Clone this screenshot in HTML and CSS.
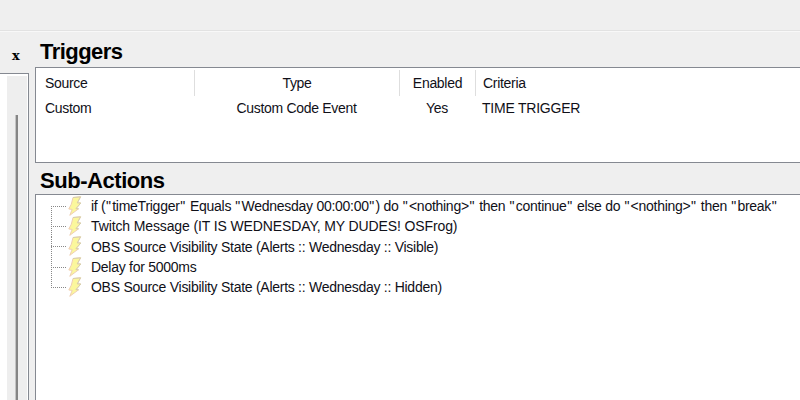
FILE: index.html
```
<!DOCTYPE html>
<html lang="en">
<head>
<meta charset="utf-8">
<title>Actions</title>
<link rel="stylesheet" href="styles.css">
</head>
<body>
<svg width="0" height="0" class="defs"><defs>
<symbol id="bolt" viewBox="0 0 14 20"><path d="M5 1.5 L12.6 .8 L9.3 6.8 L12.8 7 L8 12.6 L10.6 12.8 L1.8 19.3 L4.2 13.4 L.8 13 L3.3 8.2 Z" fill="#fbf79c" stroke="#efceb4" stroke-linejoin="round"/><path d="M5 1.5 L12.6 .8 L9.3 6.8 L12.8 7 L8 12.6 L10.6 12.8" fill="none" stroke="#d3cfaa" stroke-width=".9"/></symbol>
</defs></svg>
<div class="toolbar"></div>
<div class="main">
  <aside class="side">
    <div class="close">x</div>
    <div class="list"><div class="scroll"><div class="thumb"></div></div></div>
  </aside>
  <section class="content">
    <h2 class="t-title"><span>Triggers</span></h2>
    <div class="panel triggers">
      <div class="row head"><div class="source"><span>Source</span></div><div class="type"><span>Type</span></div><div class="enabled"><span>Enabled</span></div><div class="criteria"><span>Criteria</span></div></div>
      <div class="row"><div class="source"><span>Custom</span></div><div class="type"><span>Custom Code Event</span></div><div class="enabled"><span>Yes</span></div><div class="criteria"><span class="time">TIME TRIGGER</span></div></div>
    </div>
    <h2 class="s-title"><span>Sub-Actions</span></h2>
    <div class="panel actions">
      <div class="item"><i></i><svg><use href="#bolt"/></svg><span>if (<b>"</b>timeTrigger<b>"</b> Equals <b>"</b>Wednesday 00:00:00<b>"</b>) do <b>"</b>&lt;nothing&gt;<b>"</b> then <b>"</b>continue<b>"</b> else do <b>"</b>&lt;nothing&gt;<b>"</b> then <b>"</b>break<b>"</b></span></div>
      <div class="item"><i></i><svg><use href="#bolt"/></svg><span class="message">Twitch Message (IT IS WEDNESDAY, MY DUDES! OSFrog)</span></div>
      <div class="item"><i></i><svg><use href="#bolt"/></svg><span>OBS Source Visibility State (Alerts :: Wednesday :: Visible)</span></div>
      <div class="item"><i></i><svg><use href="#bolt"/></svg><span>Delay for 5000ms</span></div>
      <div class="item"><i></i><svg><use href="#bolt"/></svg><span>OBS Source Visibility State (Alerts :: Wednesday :: Hidden)</span></div>
    </div>
  </section>
</div>
</body>
</html>
```
FILE: styles.css
```
* { box-sizing: border-box; }
body { margin: 0; width: 800px; height: 400px; overflow: hidden; background: #efefef; color: #101018; font: 14px/20px "Liberation Sans", Arial, sans-serif; letter-spacing: -.3px; white-space: nowrap; }
.defs { display: block; }
.toolbar { height: 31px; border-bottom: 1px solid #e2e2e2; }
.main { display: flex; height: 369px; border-top: 1px solid #f8f8f8; }
.side { width: 29px; flex: none; display: flex; flex-direction: column; }
.close { height: 41px; padding: 14px 0 0 12px; font: bold 13px/20px "DejaVu Serif", serif; color: #000; }
.list { flex: 1; background: #fff; border: solid #858991; border-width: 1px 1px 0 0; padding: 2px 1px 0 7px; }
.scroll { background: #eee; height: 100%; padding: 39px 0 0 8px; }
.thumb { width: 3px; height: 100%; background: #858585; border-left: 1px solid #c4c4c4; }
.content { flex: 1; margin-left: 6px; }
h2 { margin: 0; font-size: 22px; line-height: 26px; font-weight: bold; color: #000; }
span { display: inline-block; }
.t-title { height: 35px; padding: 7px 0 0 5px; }
.t-title span { letter-spacing: -.55px; }
.s-title { height: 31px; padding: 5px 0 0 5px; letter-spacing: -.45px; }
.panel { background: #fff; border: 1px solid #858991; border-right: 0; }
.triggers { height: 96px; padding-top: 2px; }
.row { display: grid; grid-template-columns: 159px 205px 76px 1fr; height: 26px; line-height: 26px; }
.row:not(.head) { line-height: 24px; }
.head > div { border-right: 1px solid #dedede; }
.head > .criteria { border: 0; }
.source { padding-left: 9px; }
.type, .enabled { text-align: center; }
.row:not(.head) .type, .row:not(.head) .enabled { padding-right: 2px; }
.criteria { padding-left: 7px; }
.row:not(.head) .criteria { padding-left: 6px; }
.time { letter-spacing: -.22px; }
.actions { height: 210px; padding-top: 1px; }
.item { height: 20.3px; display: flex; align-items: center; padding-left: 15px; }
.item i { width: 15px; height: 100%; background: repeating-linear-gradient(90deg, #888 0 1px, transparent 1px 2px) 0 50%/15px 1px no-repeat, repeating-linear-gradient(#888 0 1px, transparent 1px 2px) 0 0/1px 100% no-repeat; }
.item:first-of-type i { background-size: 15px 1px, 1px 50%; background-position: 0 50%, 0 100%; }
.item:last-of-type i { background-size: 15px 1px, 1px 50%; }
.item svg { width: 14px; height: 20px; margin: -1px 0 0 2px; flex: none; }
.item span { margin: 0 0 0 9px; letter-spacing: -.27px; }
.item .message { letter-spacing: -.12px; }
b { font-weight: normal; letter-spacing: .6px; margin: 0 .6px; }
```
